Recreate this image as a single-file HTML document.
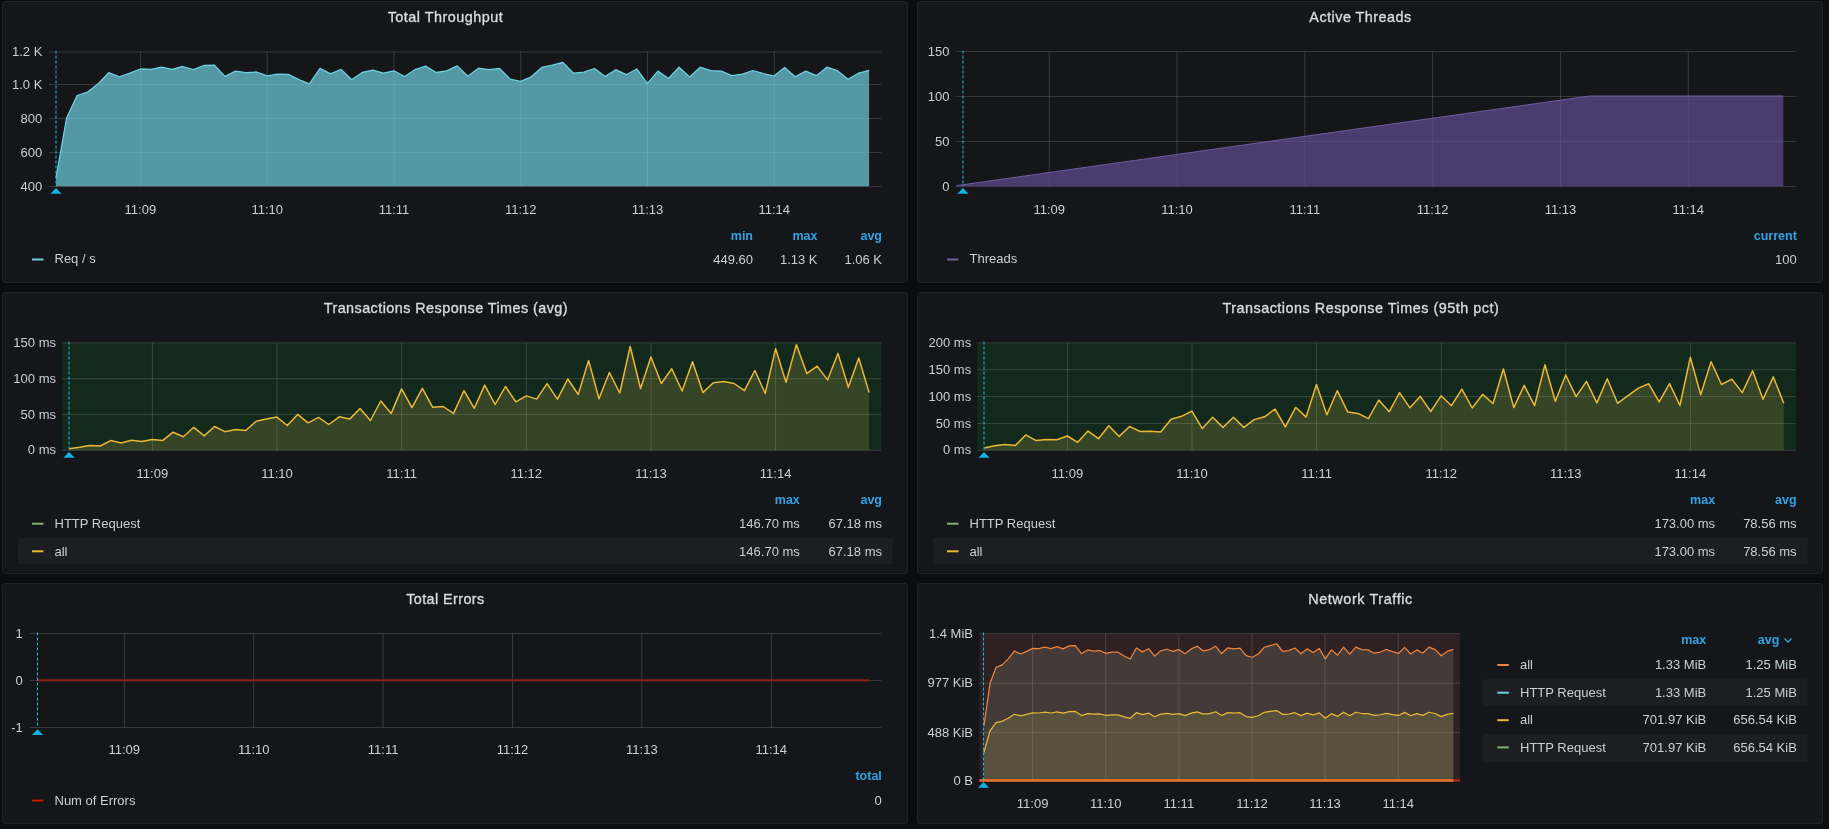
<!DOCTYPE html>
<html><head><meta charset="utf-8"><title>Grafana</title>
<style>
html,body{margin:0;padding:0;}
body{width:1829px;height:829px;background:#0b0c0e;position:relative;overflow:hidden;font-family:"Liberation Sans", sans-serif;}
.p{position:absolute;box-sizing:border-box;background:#141619;border:1px solid #202226;border-radius:3px;}
.s{position:absolute;left:0;top:0;}
.t{position:absolute;white-space:nowrap;}
.tx{position:absolute;left:0;top:0;width:1829px;height:829px;will-change:transform;}
</style></head><body>
<div class="p" style="left:2px;top:1px;width:906px;height:282px"></div><div class="p" style="left:917px;top:1px;width:906px;height:282px"></div><div class="p" style="left:2px;top:292px;width:906px;height:282px"></div><div class="p" style="left:917px;top:292px;width:906px;height:282px"></div><div class="p" style="left:2px;top:583px;width:906px;height:241px"></div><div class="p" style="left:917px;top:583px;width:906px;height:241px"></div>
<svg class="s" width="1829" height="829" viewBox="0 0 1829 829"><line x1="49" y1="52.0" x2="881" y2="52.0" stroke="rgba(200,200,200,0.2)" stroke-width="1"/><line x1="49" y1="84.5" x2="881" y2="84.5" stroke="rgba(200,200,200,0.2)" stroke-width="1"/><line x1="49" y1="118.5" x2="881" y2="118.5" stroke="rgba(200,200,200,0.2)" stroke-width="1"/><line x1="49" y1="152.5" x2="881" y2="152.5" stroke="rgba(200,200,200,0.2)" stroke-width="1"/><line x1="49" y1="186.5" x2="881" y2="186.5" stroke="rgba(200,200,200,0.2)" stroke-width="1"/><line x1="140.4" y1="51.5" x2="140.4" y2="186.5" stroke="rgba(200,200,200,0.2)" stroke-width="1"/><line x1="267.18" y1="51.5" x2="267.18" y2="186.5" stroke="rgba(200,200,200,0.2)" stroke-width="1"/><line x1="393.96000000000004" y1="51.5" x2="393.96000000000004" y2="186.5" stroke="rgba(200,200,200,0.2)" stroke-width="1"/><line x1="520.74" y1="51.5" x2="520.74" y2="186.5" stroke="rgba(200,200,200,0.2)" stroke-width="1"/><line x1="647.52" y1="51.5" x2="647.52" y2="186.5" stroke="rgba(200,200,200,0.2)" stroke-width="1"/><line x1="774.3" y1="51.5" x2="774.3" y2="186.5" stroke="rgba(200,200,200,0.2)" stroke-width="1"/><polygon points="56.00,186.2 56.00,177.80 66.56,118.30 77.12,95.50 87.68,92.10 98.24,83.70 108.80,72.70 119.36,76.90 129.92,73.20 140.48,69.00 151.04,69.30 161.60,67.20 172.16,69.30 182.72,66.50 193.28,69.70 203.84,65.50 214.40,65.10 224.96,76.40 235.52,71.20 246.08,72.70 256.64,72.00 267.20,75.90 277.76,74.20 288.32,74.30 298.88,79.70 309.44,83.90 320.00,68.40 330.56,73.90 341.12,69.40 351.68,79.70 362.24,72.50 372.80,70.20 383.36,73.10 393.92,70.80 404.48,76.50 415.04,69.70 425.60,66.10 436.16,72.50 446.72,70.80 457.28,65.90 467.84,76.20 478.40,68.20 488.96,69.70 499.52,68.50 510.08,79.10 520.64,81.40 531.20,76.80 541.76,67.40 552.32,65.10 562.88,62.50 573.44,73.10 584.00,72.20 594.56,68.50 605.12,76.60 615.68,69.70 626.24,74.70 636.80,69.00 647.36,83.70 657.92,71.10 668.48,78.50 679.04,67.20 689.60,77.00 700.16,67.20 710.72,70.70 721.28,71.10 731.84,75.70 742.40,74.10 752.96,70.50 763.52,73.60 774.08,76.10 784.64,67.60 795.20,76.80 805.76,71.10 816.32,75.70 826.88,67.20 837.44,70.70 848.00,79.30 858.56,73.20 869.12,70.50 869.12,186.2" fill="#6ed0e0" fill-opacity="0.7"/><polyline points="56.00,177.80 66.56,118.30 77.12,95.50 87.68,92.10 98.24,83.70 108.80,72.70 119.36,76.90 129.92,73.20 140.48,69.00 151.04,69.30 161.60,67.20 172.16,69.30 182.72,66.50 193.28,69.70 203.84,65.50 214.40,65.10 224.96,76.40 235.52,71.20 246.08,72.70 256.64,72.00 267.20,75.90 277.76,74.20 288.32,74.30 298.88,79.70 309.44,83.90 320.00,68.40 330.56,73.90 341.12,69.40 351.68,79.70 362.24,72.50 372.80,70.20 383.36,73.10 393.92,70.80 404.48,76.50 415.04,69.70 425.60,66.10 436.16,72.50 446.72,70.80 457.28,65.90 467.84,76.20 478.40,68.20 488.96,69.70 499.52,68.50 510.08,79.10 520.64,81.40 531.20,76.80 541.76,67.40 552.32,65.10 562.88,62.50 573.44,73.10 584.00,72.20 594.56,68.50 605.12,76.60 615.68,69.70 626.24,74.70 636.80,69.00 647.36,83.70 657.92,71.10 668.48,78.50 679.04,67.20 689.60,77.00 700.16,67.20 710.72,70.70 721.28,71.10 731.84,75.70 742.40,74.10 752.96,70.50 763.52,73.60 774.08,76.10 784.64,67.60 795.20,76.80 805.76,71.10 816.32,75.70 826.88,67.20 837.44,70.70 848.00,79.30 858.56,73.20 869.12,70.50" fill="none" stroke="#6ed0e0" stroke-width="1.3" stroke-linejoin="round"/><line x1="56.0" y1="50.5" x2="56.0" y2="186.2" stroke="#16bfe6" stroke-width="1" stroke-dasharray="3 2"/><polygon points="50.4,193.7 61.6,193.7 56.0,187.89999999999998" fill="#0fb5e0"/><line x1="32" y1="259.5" x2="43.5" y2="259.5" stroke="#6ed0e0" stroke-width="2"/><line x1="955.5" y1="51.5" x2="1795.8" y2="51.5" stroke="rgba(200,200,200,0.2)" stroke-width="1"/><line x1="955.5" y1="96.5" x2="1795.8" y2="96.5" stroke="rgba(200,200,200,0.2)" stroke-width="1"/><line x1="955.5" y1="141.5" x2="1795.8" y2="141.5" stroke="rgba(200,200,200,0.2)" stroke-width="1"/><line x1="955.5" y1="186.5" x2="1795.8" y2="186.5" stroke="rgba(200,200,200,0.2)" stroke-width="1"/><line x1="1049.2" y1="51.5" x2="1049.2" y2="186.5" stroke="rgba(200,200,200,0.2)" stroke-width="1"/><line x1="1177.02" y1="51.5" x2="1177.02" y2="186.5" stroke="rgba(200,200,200,0.2)" stroke-width="1"/><line x1="1304.8400000000001" y1="51.5" x2="1304.8400000000001" y2="186.5" stroke="rgba(200,200,200,0.2)" stroke-width="1"/><line x1="1432.66" y1="51.5" x2="1432.66" y2="186.5" stroke="rgba(200,200,200,0.2)" stroke-width="1"/><line x1="1560.48" y1="51.5" x2="1560.48" y2="186.5" stroke="rgba(200,200,200,0.2)" stroke-width="1"/><line x1="1688.3" y1="51.5" x2="1688.3" y2="186.5" stroke="rgba(200,200,200,0.2)" stroke-width="1"/><polygon points="956.3,186.2 956.3,185.7 1589.8,96 1783.3,96 1783.3,186.2" fill="#614d93" fill-opacity="0.7"/><polyline points="956.3,185.7 1589.8,96 1783.3,96" fill="none" stroke="#705da0" stroke-width="1"/><line x1="963.0" y1="50.5" x2="963.0" y2="186.2" stroke="#16bfe6" stroke-width="1" stroke-dasharray="3 2"/><polygon points="957.4,193.7 968.6,193.7 963.0,187.89999999999998" fill="#0fb5e0"/><line x1="947" y1="259.5" x2="958.5" y2="259.5" stroke="#705da0" stroke-width="2"/><rect x="62.3" y="342.9" width="818.9000000000001" height="107.40000000000003" fill="rgba(11,237,50,0.09)"/><line x1="62.3" y1="342.9" x2="881.2" y2="342.9" stroke="rgba(200,200,200,0.2)" stroke-width="1"/><line x1="62.3" y1="378.7" x2="881.2" y2="378.7" stroke="rgba(200,200,200,0.2)" stroke-width="1"/><line x1="62.3" y1="414.5" x2="881.2" y2="414.5" stroke="rgba(200,200,200,0.2)" stroke-width="1"/><line x1="62.3" y1="450.3" x2="881.2" y2="450.3" stroke="rgba(200,200,200,0.2)" stroke-width="1"/><line x1="152.4" y1="342.9" x2="152.4" y2="450.3" stroke="rgba(200,200,200,0.2)" stroke-width="1"/><line x1="277.04" y1="342.9" x2="277.04" y2="450.3" stroke="rgba(200,200,200,0.2)" stroke-width="1"/><line x1="401.68" y1="342.9" x2="401.68" y2="450.3" stroke="rgba(200,200,200,0.2)" stroke-width="1"/><line x1="526.32" y1="342.9" x2="526.32" y2="450.3" stroke="rgba(200,200,200,0.2)" stroke-width="1"/><line x1="650.96" y1="342.9" x2="650.96" y2="450.3" stroke="rgba(200,200,200,0.2)" stroke-width="1"/><line x1="775.6" y1="342.9" x2="775.6" y2="450.3" stroke="rgba(200,200,200,0.2)" stroke-width="1"/><polygon points="69.10,450.3 69.10,448.70 79.49,447.20 89.88,445.40 100.27,446.00 110.66,440.60 121.05,442.90 131.44,440.30 141.83,441.40 152.22,439.40 162.61,440.60 173.00,432.20 183.39,436.80 193.78,427.30 204.17,435.90 214.56,426.50 224.95,431.70 235.34,429.60 245.73,430.50 256.12,421.30 266.51,419.10 276.90,417.10 287.29,425.50 297.68,414.40 308.07,422.80 318.46,417.40 328.85,424.50 339.24,416.80 349.63,419.10 360.02,408.50 370.41,420.50 380.80,401.00 391.19,413.40 401.58,388.90 411.97,407.70 422.36,388.40 432.75,407.30 443.14,406.50 453.53,413.40 463.92,390.70 474.31,408.30 484.70,385.10 495.09,404.50 505.48,386.50 515.87,401.80 526.26,395.90 536.65,399.10 547.04,383.60 557.43,399.10 567.82,379.00 578.21,394.50 588.60,360.40 598.99,398.80 609.38,372.50 619.77,393.00 630.16,346.50 640.55,388.50 650.94,357.00 661.33,383.50 671.72,368.80 682.11,391.00 692.50,361.80 702.89,392.60 713.28,382.80 723.67,381.50 734.06,383.50 744.45,390.60 754.84,370.50 765.23,393.50 775.62,348.70 786.01,382.20 796.40,344.60 806.79,373.60 817.18,366.10 827.57,379.90 837.96,353.40 848.35,387.20 858.74,358.00 869.13,392.60 869.13,450.3" fill="#7eb26d" fill-opacity="0.1"/><polygon points="69.10,450.3 69.10,448.70 79.49,447.20 89.88,445.40 100.27,446.00 110.66,440.60 121.05,442.90 131.44,440.30 141.83,441.40 152.22,439.40 162.61,440.60 173.00,432.20 183.39,436.80 193.78,427.30 204.17,435.90 214.56,426.50 224.95,431.70 235.34,429.60 245.73,430.50 256.12,421.30 266.51,419.10 276.90,417.10 287.29,425.50 297.68,414.40 308.07,422.80 318.46,417.40 328.85,424.50 339.24,416.80 349.63,419.10 360.02,408.50 370.41,420.50 380.80,401.00 391.19,413.40 401.58,388.90 411.97,407.70 422.36,388.40 432.75,407.30 443.14,406.50 453.53,413.40 463.92,390.70 474.31,408.30 484.70,385.10 495.09,404.50 505.48,386.50 515.87,401.80 526.26,395.90 536.65,399.10 547.04,383.60 557.43,399.10 567.82,379.00 578.21,394.50 588.60,360.40 598.99,398.80 609.38,372.50 619.77,393.00 630.16,346.50 640.55,388.50 650.94,357.00 661.33,383.50 671.72,368.80 682.11,391.00 692.50,361.80 702.89,392.60 713.28,382.80 723.67,381.50 734.06,383.50 744.45,390.60 754.84,370.50 765.23,393.50 775.62,348.70 786.01,382.20 796.40,344.60 806.79,373.60 817.18,366.10 827.57,379.90 837.96,353.40 848.35,387.20 858.74,358.00 869.13,392.60 869.13,450.3" fill="#eab839" fill-opacity="0.12"/><polyline points="69.10,448.70 79.49,447.20 89.88,445.40 100.27,446.00 110.66,440.60 121.05,442.90 131.44,440.30 141.83,441.40 152.22,439.40 162.61,440.60 173.00,432.20 183.39,436.80 193.78,427.30 204.17,435.90 214.56,426.50 224.95,431.70 235.34,429.60 245.73,430.50 256.12,421.30 266.51,419.10 276.90,417.10 287.29,425.50 297.68,414.40 308.07,422.80 318.46,417.40 328.85,424.50 339.24,416.80 349.63,419.10 360.02,408.50 370.41,420.50 380.80,401.00 391.19,413.40 401.58,388.90 411.97,407.70 422.36,388.40 432.75,407.30 443.14,406.50 453.53,413.40 463.92,390.70 474.31,408.30 484.70,385.10 495.09,404.50 505.48,386.50 515.87,401.80 526.26,395.90 536.65,399.10 547.04,383.60 557.43,399.10 567.82,379.00 578.21,394.50 588.60,360.40 598.99,398.80 609.38,372.50 619.77,393.00 630.16,346.50 640.55,388.50 650.94,357.00 661.33,383.50 671.72,368.80 682.11,391.00 692.50,361.80 702.89,392.60 713.28,382.80 723.67,381.50 734.06,383.50 744.45,390.60 754.84,370.50 765.23,393.50 775.62,348.70 786.01,382.20 796.40,344.60 806.79,373.60 817.18,366.10 827.57,379.90 837.96,353.40 848.35,387.20 858.74,358.00 869.13,392.60" fill="none" stroke="#eab839" stroke-width="1.5" stroke-linejoin="round"/><line x1="69.0" y1="341.5" x2="69.0" y2="450.3" stroke="#16bfe6" stroke-width="1" stroke-dasharray="3 2"/><polygon points="63.4,457.8 74.6,457.8 69.0,452.0" fill="#0fb5e0"/><rect x="18" y="538" width="874.5" height="26" fill="#1c1e22"/><line x1="32" y1="523.7" x2="43.5" y2="523.7" stroke="#7eb26d" stroke-width="2"/><line x1="32" y1="551.3" x2="43.5" y2="551.3" stroke="#eab839" stroke-width="2"/><rect x="977.3" y="342.9" width="818.7" height="107.40000000000003" fill="rgba(11,237,50,0.09)"/><line x1="977.3" y1="342.9" x2="1796.0" y2="342.9" stroke="rgba(200,200,200,0.2)" stroke-width="1"/><line x1="977.3" y1="369.75" x2="1796.0" y2="369.75" stroke="rgba(200,200,200,0.2)" stroke-width="1"/><line x1="977.3" y1="396.59999999999997" x2="1796.0" y2="396.59999999999997" stroke="rgba(200,200,200,0.2)" stroke-width="1"/><line x1="977.3" y1="423.45" x2="1796.0" y2="423.45" stroke="rgba(200,200,200,0.2)" stroke-width="1"/><line x1="977.3" y1="450.29999999999995" x2="1796.0" y2="450.29999999999995" stroke="rgba(200,200,200,0.2)" stroke-width="1"/><line x1="1067.4" y1="342.9" x2="1067.4" y2="450.3" stroke="rgba(200,200,200,0.2)" stroke-width="1"/><line x1="1192.0" y1="342.9" x2="1192.0" y2="450.3" stroke="rgba(200,200,200,0.2)" stroke-width="1"/><line x1="1316.6000000000001" y1="342.9" x2="1316.6000000000001" y2="450.3" stroke="rgba(200,200,200,0.2)" stroke-width="1"/><line x1="1441.2" y1="342.9" x2="1441.2" y2="450.3" stroke="rgba(200,200,200,0.2)" stroke-width="1"/><line x1="1565.8000000000002" y1="342.9" x2="1565.8000000000002" y2="450.3" stroke="rgba(200,200,200,0.2)" stroke-width="1"/><line x1="1690.4" y1="342.9" x2="1690.4" y2="450.3" stroke="rgba(200,200,200,0.2)" stroke-width="1"/><polygon points="984.20,450.3 984.20,448.10 994.58,445.80 1004.97,444.40 1015.35,445.50 1025.74,434.90 1036.12,440.60 1046.50,439.50 1056.89,439.80 1067.27,436.00 1077.66,442.30 1088.04,431.10 1098.42,438.70 1108.81,425.70 1119.19,436.40 1129.58,426.50 1139.96,431.40 1150.34,431.20 1160.73,432.00 1171.11,419.20 1181.50,416.30 1191.88,411.10 1202.26,428.60 1212.65,417.30 1223.03,427.40 1233.42,417.30 1243.80,427.40 1254.18,419.60 1264.57,416.80 1274.95,409.00 1285.34,426.80 1295.72,407.30 1306.10,417.10 1316.49,384.60 1326.87,414.80 1337.26,390.70 1347.64,411.90 1358.02,413.40 1368.41,418.60 1378.79,400.00 1389.18,411.80 1399.56,392.70 1409.94,407.80 1420.33,396.30 1430.71,411.50 1441.10,395.80 1451.48,405.70 1461.86,389.10 1472.25,408.00 1482.63,394.40 1493.02,403.50 1503.40,369.00 1513.78,407.60 1524.17,385.40 1534.55,405.70 1544.94,364.80 1555.32,401.30 1565.70,375.00 1576.09,396.60 1586.47,381.40 1596.86,402.90 1607.24,378.80 1617.62,403.30 1628.01,395.60 1638.39,388.10 1648.78,383.80 1659.16,401.90 1669.54,383.60 1679.93,405.50 1690.31,357.30 1700.70,394.80 1711.08,361.70 1721.46,384.50 1731.85,379.20 1742.23,392.60 1752.62,370.70 1763.00,399.30 1773.38,376.90 1783.77,403.30 1783.77,450.3" fill="#7eb26d" fill-opacity="0.1"/><polygon points="984.20,450.3 984.20,448.10 994.58,445.80 1004.97,444.40 1015.35,445.50 1025.74,434.90 1036.12,440.60 1046.50,439.50 1056.89,439.80 1067.27,436.00 1077.66,442.30 1088.04,431.10 1098.42,438.70 1108.81,425.70 1119.19,436.40 1129.58,426.50 1139.96,431.40 1150.34,431.20 1160.73,432.00 1171.11,419.20 1181.50,416.30 1191.88,411.10 1202.26,428.60 1212.65,417.30 1223.03,427.40 1233.42,417.30 1243.80,427.40 1254.18,419.60 1264.57,416.80 1274.95,409.00 1285.34,426.80 1295.72,407.30 1306.10,417.10 1316.49,384.60 1326.87,414.80 1337.26,390.70 1347.64,411.90 1358.02,413.40 1368.41,418.60 1378.79,400.00 1389.18,411.80 1399.56,392.70 1409.94,407.80 1420.33,396.30 1430.71,411.50 1441.10,395.80 1451.48,405.70 1461.86,389.10 1472.25,408.00 1482.63,394.40 1493.02,403.50 1503.40,369.00 1513.78,407.60 1524.17,385.40 1534.55,405.70 1544.94,364.80 1555.32,401.30 1565.70,375.00 1576.09,396.60 1586.47,381.40 1596.86,402.90 1607.24,378.80 1617.62,403.30 1628.01,395.60 1638.39,388.10 1648.78,383.80 1659.16,401.90 1669.54,383.60 1679.93,405.50 1690.31,357.30 1700.70,394.80 1711.08,361.70 1721.46,384.50 1731.85,379.20 1742.23,392.60 1752.62,370.70 1763.00,399.30 1773.38,376.90 1783.77,403.30 1783.77,450.3" fill="#eab839" fill-opacity="0.12"/><polyline points="984.20,448.10 994.58,445.80 1004.97,444.40 1015.35,445.50 1025.74,434.90 1036.12,440.60 1046.50,439.50 1056.89,439.80 1067.27,436.00 1077.66,442.30 1088.04,431.10 1098.42,438.70 1108.81,425.70 1119.19,436.40 1129.58,426.50 1139.96,431.40 1150.34,431.20 1160.73,432.00 1171.11,419.20 1181.50,416.30 1191.88,411.10 1202.26,428.60 1212.65,417.30 1223.03,427.40 1233.42,417.30 1243.80,427.40 1254.18,419.60 1264.57,416.80 1274.95,409.00 1285.34,426.80 1295.72,407.30 1306.10,417.10 1316.49,384.60 1326.87,414.80 1337.26,390.70 1347.64,411.90 1358.02,413.40 1368.41,418.60 1378.79,400.00 1389.18,411.80 1399.56,392.70 1409.94,407.80 1420.33,396.30 1430.71,411.50 1441.10,395.80 1451.48,405.70 1461.86,389.10 1472.25,408.00 1482.63,394.40 1493.02,403.50 1503.40,369.00 1513.78,407.60 1524.17,385.40 1534.55,405.70 1544.94,364.80 1555.32,401.30 1565.70,375.00 1576.09,396.60 1586.47,381.40 1596.86,402.90 1607.24,378.80 1617.62,403.30 1628.01,395.60 1638.39,388.10 1648.78,383.80 1659.16,401.90 1669.54,383.60 1679.93,405.50 1690.31,357.30 1700.70,394.80 1711.08,361.70 1721.46,384.50 1731.85,379.20 1742.23,392.60 1752.62,370.70 1763.00,399.30 1773.38,376.90 1783.77,403.30" fill="none" stroke="#eab839" stroke-width="1.5" stroke-linejoin="round"/><line x1="984.0" y1="341.5" x2="984.0" y2="450.3" stroke="#16bfe6" stroke-width="1" stroke-dasharray="3 2"/><polygon points="978.4,457.8 989.6,457.8 984.0,452.0" fill="#0fb5e0"/><rect x="933" y="538" width="874.8" height="26" fill="#1c1e22"/><line x1="947" y1="523.7" x2="958.5" y2="523.7" stroke="#7eb26d" stroke-width="2"/><line x1="947" y1="551.3" x2="958.5" y2="551.3" stroke="#eab839" stroke-width="2"/><line x1="30" y1="633.5" x2="881" y2="633.5" stroke="rgba(200,200,200,0.2)" stroke-width="1"/><line x1="30" y1="680.5" x2="881" y2="680.5" stroke="rgba(200,200,200,0.2)" stroke-width="1"/><line x1="30" y1="727.5" x2="881" y2="727.5" stroke="rgba(200,200,200,0.2)" stroke-width="1"/><line x1="124.3" y1="633.5" x2="124.3" y2="727.5" stroke="rgba(200,200,200,0.2)" stroke-width="1"/><line x1="253.7" y1="633.5" x2="253.7" y2="727.5" stroke="rgba(200,200,200,0.2)" stroke-width="1"/><line x1="383.1" y1="633.5" x2="383.1" y2="727.5" stroke="rgba(200,200,200,0.2)" stroke-width="1"/><line x1="512.5" y1="633.5" x2="512.5" y2="727.5" stroke="rgba(200,200,200,0.2)" stroke-width="1"/><line x1="641.9" y1="633.5" x2="641.9" y2="727.5" stroke="rgba(200,200,200,0.2)" stroke-width="1"/><line x1="771.3" y1="633.5" x2="771.3" y2="727.5" stroke="rgba(200,200,200,0.2)" stroke-width="1"/><line x1="37" y1="680.2" x2="869" y2="680.2" stroke="#8f2217" stroke-width="2"/><line x1="37.5" y1="632.5" x2="37.5" y2="727.5" stroke="#16bfe6" stroke-width="1" stroke-dasharray="3 2"/><polygon points="31.9,735.0 43.1,735.0 37.5,729.2" fill="#0fb5e0"/><line x1="32" y1="800.6" x2="43.5" y2="800.6" stroke="#bf1b00" stroke-width="2"/><rect x="979.5" y="633.6" width="480.5999999999999" height="146.69999999999993" fill="rgba(234,112,112,0.12)"/><line x1="979.5" y1="633.6" x2="1460.1" y2="633.6" stroke="rgba(200,200,200,0.2)" stroke-width="1"/><line x1="979.5" y1="683.2" x2="1460.1" y2="683.2" stroke="rgba(200,200,200,0.2)" stroke-width="1"/><line x1="979.5" y1="732.4" x2="1460.1" y2="732.4" stroke="rgba(200,200,200,0.2)" stroke-width="1"/><line x1="979.5" y1="780.5" x2="1460.1" y2="780.5" stroke="rgba(200,200,200,0.2)" stroke-width="1"/><line x1="1032.6" y1="633.6" x2="1032.6" y2="780.3" stroke="rgba(200,200,200,0.2)" stroke-width="1"/><line x1="1105.7199999999998" y1="633.6" x2="1105.7199999999998" y2="780.3" stroke="rgba(200,200,200,0.2)" stroke-width="1"/><line x1="1178.84" y1="633.6" x2="1178.84" y2="780.3" stroke="rgba(200,200,200,0.2)" stroke-width="1"/><line x1="1251.96" y1="633.6" x2="1251.96" y2="780.3" stroke="rgba(200,200,200,0.2)" stroke-width="1"/><line x1="1325.08" y1="633.6" x2="1325.08" y2="780.3" stroke="rgba(200,200,200,0.2)" stroke-width="1"/><line x1="1398.1999999999998" y1="633.6" x2="1398.1999999999998" y2="780.3" stroke="rgba(200,200,200,0.2)" stroke-width="1"/><polygon points="983.90,780.3 983.90,725.97 990.00,683.55 996.09,667.29 1002.19,664.87 1008.29,658.88 1014.38,651.04 1020.48,654.03 1026.58,651.39 1032.68,648.40 1038.77,648.61 1044.87,647.12 1050.97,648.61 1057.06,646.62 1063.16,648.90 1069.26,645.90 1075.36,645.62 1081.45,653.67 1087.55,649.97 1093.65,651.04 1099.74,650.54 1105.84,653.32 1111.94,652.11 1118.03,652.18 1124.13,656.03 1130.23,659.02 1136.33,647.97 1142.42,651.89 1148.52,648.68 1154.62,656.03 1160.71,650.89 1166.81,649.25 1172.91,651.32 1179.00,649.68 1185.10,653.75 1191.20,648.90 1197.30,646.33 1203.39,650.89 1209.49,649.68 1215.59,646.19 1221.68,653.53 1227.78,647.83 1233.88,648.90 1239.97,648.04 1246.07,655.60 1252.17,657.24 1258.26,653.96 1264.36,647.26 1270.46,645.62 1276.56,643.76 1282.65,651.32 1288.75,650.68 1294.85,648.04 1300.94,653.82 1307.04,648.90 1313.14,652.46 1319.24,648.40 1325.33,658.88 1331.43,649.90 1337.53,655.17 1343.62,647.12 1349.72,654.10 1355.82,647.12 1361.91,649.61 1368.01,649.90 1374.11,653.18 1380.20,652.04 1386.30,649.47 1392.40,651.68 1398.50,653.46 1404.59,647.40 1410.69,653.96 1416.79,649.90 1422.88,653.18 1428.98,647.12 1435.08,649.61 1441.17,655.74 1447.27,651.39 1453.37,649.47 1453.37,780.3" fill="#ef843c" fill-opacity="0.1"/><polygon points="983.90,780.3 983.90,725.97 990.00,683.55 996.09,667.29 1002.19,664.87 1008.29,658.88 1014.38,651.04 1020.48,654.03 1026.58,651.39 1032.68,648.40 1038.77,648.61 1044.87,647.12 1050.97,648.61 1057.06,646.62 1063.16,648.90 1069.26,645.90 1075.36,645.62 1081.45,653.67 1087.55,649.97 1093.65,651.04 1099.74,650.54 1105.84,653.32 1111.94,652.11 1118.03,652.18 1124.13,656.03 1130.23,659.02 1136.33,647.97 1142.42,651.89 1148.52,648.68 1154.62,656.03 1160.71,650.89 1166.81,649.25 1172.91,651.32 1179.00,649.68 1185.10,653.75 1191.20,648.90 1197.30,646.33 1203.39,650.89 1209.49,649.68 1215.59,646.19 1221.68,653.53 1227.78,647.83 1233.88,648.90 1239.97,648.04 1246.07,655.60 1252.17,657.24 1258.26,653.96 1264.36,647.26 1270.46,645.62 1276.56,643.76 1282.65,651.32 1288.75,650.68 1294.85,648.04 1300.94,653.82 1307.04,648.90 1313.14,652.46 1319.24,648.40 1325.33,658.88 1331.43,649.90 1337.53,655.17 1343.62,647.12 1349.72,654.10 1355.82,647.12 1361.91,649.61 1368.01,649.90 1374.11,653.18 1380.20,652.04 1386.30,649.47 1392.40,651.68 1398.50,653.46 1404.59,647.40 1410.69,653.96 1416.79,649.90 1422.88,653.18 1428.98,647.12 1435.08,649.61 1441.17,655.74 1447.27,651.39 1453.37,649.47 1453.37,780.3" fill="#6ed0e0" fill-opacity="0.1"/><polygon points="983.90,780.3 983.90,752.54 990.00,730.86 996.09,722.55 1002.19,721.31 1008.29,718.25 1014.38,714.24 1020.48,715.77 1026.58,714.42 1032.68,712.89 1038.77,713.00 1044.87,712.24 1050.97,713.00 1057.06,711.98 1063.16,713.15 1069.26,711.62 1075.36,711.47 1081.45,715.59 1087.55,713.69 1093.65,714.24 1099.74,713.99 1105.84,715.41 1111.94,714.79 1118.03,714.82 1124.13,716.79 1130.23,718.32 1136.33,712.67 1142.42,714.68 1148.52,713.04 1154.62,716.79 1160.71,714.17 1166.81,713.33 1172.91,714.39 1179.00,713.55 1185.10,715.63 1191.20,713.15 1197.30,711.84 1203.39,714.17 1209.49,713.55 1215.59,711.76 1221.68,715.52 1227.78,712.60 1233.88,713.15 1239.97,712.71 1246.07,716.57 1252.17,717.41 1258.26,715.73 1264.36,712.31 1270.46,711.47 1276.56,710.52 1282.65,714.39 1288.75,714.06 1294.85,712.71 1300.94,715.66 1307.04,713.15 1313.14,714.97 1319.24,712.89 1325.33,718.25 1331.43,713.66 1337.53,716.35 1343.62,712.24 1349.72,715.81 1355.82,712.24 1361.91,713.51 1368.01,713.66 1374.11,715.33 1380.20,714.75 1386.30,713.44 1392.40,714.57 1398.50,715.48 1404.59,712.38 1410.69,715.73 1416.79,713.66 1422.88,715.33 1428.98,712.24 1435.08,713.51 1441.17,716.65 1447.27,714.42 1453.37,713.44 1453.37,780.3" fill="#eab839" fill-opacity="0.1"/><polygon points="983.90,780.3 983.90,752.54 990.00,730.86 996.09,722.55 1002.19,721.31 1008.29,718.25 1014.38,714.24 1020.48,715.77 1026.58,714.42 1032.68,712.89 1038.77,713.00 1044.87,712.24 1050.97,713.00 1057.06,711.98 1063.16,713.15 1069.26,711.62 1075.36,711.47 1081.45,715.59 1087.55,713.69 1093.65,714.24 1099.74,713.99 1105.84,715.41 1111.94,714.79 1118.03,714.82 1124.13,716.79 1130.23,718.32 1136.33,712.67 1142.42,714.68 1148.52,713.04 1154.62,716.79 1160.71,714.17 1166.81,713.33 1172.91,714.39 1179.00,713.55 1185.10,715.63 1191.20,713.15 1197.30,711.84 1203.39,714.17 1209.49,713.55 1215.59,711.76 1221.68,715.52 1227.78,712.60 1233.88,713.15 1239.97,712.71 1246.07,716.57 1252.17,717.41 1258.26,715.73 1264.36,712.31 1270.46,711.47 1276.56,710.52 1282.65,714.39 1288.75,714.06 1294.85,712.71 1300.94,715.66 1307.04,713.15 1313.14,714.97 1319.24,712.89 1325.33,718.25 1331.43,713.66 1337.53,716.35 1343.62,712.24 1349.72,715.81 1355.82,712.24 1361.91,713.51 1368.01,713.66 1374.11,715.33 1380.20,714.75 1386.30,713.44 1392.40,714.57 1398.50,715.48 1404.59,712.38 1410.69,715.73 1416.79,713.66 1422.88,715.33 1428.98,712.24 1435.08,713.51 1441.17,716.65 1447.27,714.42 1453.37,713.44 1453.37,780.3" fill="#7eb26d" fill-opacity="0.1"/><polyline points="983.90,725.97 990.00,683.55 996.09,667.29 1002.19,664.87 1008.29,658.88 1014.38,651.04 1020.48,654.03 1026.58,651.39 1032.68,648.40 1038.77,648.61 1044.87,647.12 1050.97,648.61 1057.06,646.62 1063.16,648.90 1069.26,645.90 1075.36,645.62 1081.45,653.67 1087.55,649.97 1093.65,651.04 1099.74,650.54 1105.84,653.32 1111.94,652.11 1118.03,652.18 1124.13,656.03 1130.23,659.02 1136.33,647.97 1142.42,651.89 1148.52,648.68 1154.62,656.03 1160.71,650.89 1166.81,649.25 1172.91,651.32 1179.00,649.68 1185.10,653.75 1191.20,648.90 1197.30,646.33 1203.39,650.89 1209.49,649.68 1215.59,646.19 1221.68,653.53 1227.78,647.83 1233.88,648.90 1239.97,648.04 1246.07,655.60 1252.17,657.24 1258.26,653.96 1264.36,647.26 1270.46,645.62 1276.56,643.76 1282.65,651.32 1288.75,650.68 1294.85,648.04 1300.94,653.82 1307.04,648.90 1313.14,652.46 1319.24,648.40 1325.33,658.88 1331.43,649.90 1337.53,655.17 1343.62,647.12 1349.72,654.10 1355.82,647.12 1361.91,649.61 1368.01,649.90 1374.11,653.18 1380.20,652.04 1386.30,649.47 1392.40,651.68 1398.50,653.46 1404.59,647.40 1410.69,653.96 1416.79,649.90 1422.88,653.18 1428.98,647.12 1435.08,649.61 1441.17,655.74 1447.27,651.39 1453.37,649.47" fill="none" stroke="#ef843c" stroke-width="1.25" stroke-linejoin="round"/><polyline points="983.90,752.54 990.00,730.86 996.09,722.55 1002.19,721.31 1008.29,718.25 1014.38,714.24 1020.48,715.77 1026.58,714.42 1032.68,712.89 1038.77,713.00 1044.87,712.24 1050.97,713.00 1057.06,711.98 1063.16,713.15 1069.26,711.62 1075.36,711.47 1081.45,715.59 1087.55,713.69 1093.65,714.24 1099.74,713.99 1105.84,715.41 1111.94,714.79 1118.03,714.82 1124.13,716.79 1130.23,718.32 1136.33,712.67 1142.42,714.68 1148.52,713.04 1154.62,716.79 1160.71,714.17 1166.81,713.33 1172.91,714.39 1179.00,713.55 1185.10,715.63 1191.20,713.15 1197.30,711.84 1203.39,714.17 1209.49,713.55 1215.59,711.76 1221.68,715.52 1227.78,712.60 1233.88,713.15 1239.97,712.71 1246.07,716.57 1252.17,717.41 1258.26,715.73 1264.36,712.31 1270.46,711.47 1276.56,710.52 1282.65,714.39 1288.75,714.06 1294.85,712.71 1300.94,715.66 1307.04,713.15 1313.14,714.97 1319.24,712.89 1325.33,718.25 1331.43,713.66 1337.53,716.35 1343.62,712.24 1349.72,715.81 1355.82,712.24 1361.91,713.51 1368.01,713.66 1374.11,715.33 1380.20,714.75 1386.30,713.44 1392.40,714.57 1398.50,715.48 1404.59,712.38 1410.69,715.73 1416.79,713.66 1422.88,715.33 1428.98,712.24 1435.08,713.51 1441.17,716.65 1447.27,714.42 1453.37,713.44" fill="none" stroke="#eab839" stroke-width="1.25" stroke-linejoin="round"/><line x1="979.5" y1="780.5" x2="1460.1" y2="780.5" stroke="rgba(237,46,24,0.6)" stroke-width="2.5"/><line x1="979.5" y1="780.5" x2="1453.3690000000001" y2="780.5" stroke="#e0752d" stroke-width="2.5"/><line x1="983.5" y1="632.5" x2="983.5" y2="780.3" stroke="#16bfe6" stroke-width="1" stroke-dasharray="3 2"/><polygon points="977.9,787.8 989.1,787.8 983.5,782.0" fill="#0fb5e0"/><polyline points="1784.5,638.5 1788,642 1791.5,638.5" fill="none" stroke="#33a2e5" stroke-width="1.3"/><rect x="1483" y="679.3" width="324.70000000000005" height="26.700000000000045" fill="#1c1e22"/><rect x="1483" y="733.7" width="324.70000000000005" height="27.699999999999932" fill="#1c1e22"/><line x1="1497.3" y1="665.0" x2="1508.8" y2="665.0" stroke="#ef843c" stroke-width="2"/><line x1="1497.3" y1="692.7" x2="1508.8" y2="692.7" stroke="#6ed0e0" stroke-width="2"/><line x1="1497.3" y1="720.2" x2="1508.8" y2="720.2" stroke="#eab839" stroke-width="2"/><line x1="1497.3" y1="747.4" x2="1508.8" y2="747.4" stroke="#7eb26d" stroke-width="2"/></svg>
<div class="tx"><div class="t" style="left:145.50px;width:600px;text-align:center;top:9.87px;font-size:14.4px;line-height:14.4px;font-weight:normal;color:#d8d9da;-webkit-text-stroke:0.35px #d8d9da;letter-spacing:0.5px;">Total Throughput</div><div class="t" style="left:1060.50px;width:600px;text-align:center;top:9.97px;font-size:14.4px;line-height:14.4px;font-weight:normal;color:#d8d9da;-webkit-text-stroke:0.35px #d8d9da;letter-spacing:0.47px;">Active Threads</div><div class="t" style="left:145.90px;width:600px;text-align:center;top:300.87px;font-size:14.4px;line-height:14.4px;font-weight:normal;color:#d8d9da;-webkit-text-stroke:0.35px #d8d9da;letter-spacing:0.44px;">Transactions Response Times (avg)</div><div class="t" style="left:1060.80px;width:600px;text-align:center;top:300.87px;font-size:14.4px;line-height:14.4px;font-weight:normal;color:#d8d9da;-webkit-text-stroke:0.35px #d8d9da;letter-spacing:0.5px;">Transactions Response Times (95th pct)</div><div class="t" style="left:145.40px;width:600px;text-align:center;top:592.27px;font-size:14.4px;line-height:14.4px;font-weight:normal;color:#d8d9da;-webkit-text-stroke:0.35px #d8d9da;letter-spacing:0.41px;">Total Errors</div><div class="t" style="left:1060.50px;width:600px;text-align:center;top:592.27px;font-size:14.4px;line-height:14.4px;font-weight:normal;color:#d8d9da;-webkit-text-stroke:0.35px #d8d9da;letter-spacing:0.6px;">Network Traffic</div><div class="t" style="right:1786.70px;top:45.25px;font-size:13px;line-height:13px;font-weight:normal;color:#c7d0d9;">1.2 K</div><div class="t" style="right:1786.70px;top:77.75px;font-size:13px;line-height:13px;font-weight:normal;color:#c7d0d9;">1.0 K</div><div class="t" style="right:1786.70px;top:111.75px;font-size:13px;line-height:13px;font-weight:normal;color:#c7d0d9;">800</div><div class="t" style="right:1786.70px;top:145.75px;font-size:13px;line-height:13px;font-weight:normal;color:#c7d0d9;">600</div><div class="t" style="right:1786.70px;top:179.75px;font-size:13px;line-height:13px;font-weight:normal;color:#c7d0d9;">400</div><div class="t" style="left:-159.60px;width:600px;text-align:center;top:202.55px;font-size:13px;line-height:13px;font-weight:normal;color:#c7d0d9;">11:09</div><div class="t" style="left:-32.82px;width:600px;text-align:center;top:202.55px;font-size:13px;line-height:13px;font-weight:normal;color:#c7d0d9;">11:10</div><div class="t" style="left:93.96px;width:600px;text-align:center;top:202.55px;font-size:13px;line-height:13px;font-weight:normal;color:#c7d0d9;">11:11</div><div class="t" style="left:220.74px;width:600px;text-align:center;top:202.55px;font-size:13px;line-height:13px;font-weight:normal;color:#c7d0d9;">11:12</div><div class="t" style="left:347.52px;width:600px;text-align:center;top:202.55px;font-size:13px;line-height:13px;font-weight:normal;color:#c7d0d9;">11:13</div><div class="t" style="left:474.30px;width:600px;text-align:center;top:202.55px;font-size:13px;line-height:13px;font-weight:normal;color:#c7d0d9;">11:14</div><div class="t" style="left:54.50px;top:252.15px;font-size:13px;line-height:13px;font-weight:normal;color:#c7d0d9;">Req / s</div><div class="t" style="right:1076.00px;top:229.69px;font-size:12.5px;line-height:12.5px;font-weight:bold;color:#33a2e5;">min</div><div class="t" style="right:1011.50px;top:229.69px;font-size:12.5px;line-height:12.5px;font-weight:bold;color:#33a2e5;">max</div><div class="t" style="right:947.00px;top:229.69px;font-size:12.5px;line-height:12.5px;font-weight:bold;color:#33a2e5;">avg</div><div class="t" style="right:1076.00px;top:252.95px;font-size:13px;line-height:13px;font-weight:normal;color:#c7d0d9;">449.60</div><div class="t" style="right:1011.50px;top:252.95px;font-size:13px;line-height:13px;font-weight:normal;color:#c7d0d9;">1.13 K</div><div class="t" style="right:947.00px;top:252.95px;font-size:13px;line-height:13px;font-weight:normal;color:#c7d0d9;">1.06 K</div><div class="t" style="right:879.50px;top:44.65px;font-size:13px;line-height:13px;font-weight:normal;color:#c7d0d9;">150</div><div class="t" style="right:879.50px;top:89.65px;font-size:13px;line-height:13px;font-weight:normal;color:#c7d0d9;">100</div><div class="t" style="right:879.50px;top:134.65px;font-size:13px;line-height:13px;font-weight:normal;color:#c7d0d9;">50</div><div class="t" style="right:879.50px;top:179.65px;font-size:13px;line-height:13px;font-weight:normal;color:#c7d0d9;">0</div><div class="t" style="left:749.20px;width:600px;text-align:center;top:202.55px;font-size:13px;line-height:13px;font-weight:normal;color:#c7d0d9;">11:09</div><div class="t" style="left:877.02px;width:600px;text-align:center;top:202.55px;font-size:13px;line-height:13px;font-weight:normal;color:#c7d0d9;">11:10</div><div class="t" style="left:1004.84px;width:600px;text-align:center;top:202.55px;font-size:13px;line-height:13px;font-weight:normal;color:#c7d0d9;">11:11</div><div class="t" style="left:1132.66px;width:600px;text-align:center;top:202.55px;font-size:13px;line-height:13px;font-weight:normal;color:#c7d0d9;">11:12</div><div class="t" style="left:1260.48px;width:600px;text-align:center;top:202.55px;font-size:13px;line-height:13px;font-weight:normal;color:#c7d0d9;">11:13</div><div class="t" style="left:1388.30px;width:600px;text-align:center;top:202.55px;font-size:13px;line-height:13px;font-weight:normal;color:#c7d0d9;">11:14</div><div class="t" style="left:969.50px;top:252.15px;font-size:13px;line-height:13px;font-weight:normal;color:#c7d0d9;">Threads</div><div class="t" style="right:32.20px;top:229.69px;font-size:12.5px;line-height:12.5px;font-weight:bold;color:#33a2e5;">current</div><div class="t" style="right:32.20px;top:252.95px;font-size:13px;line-height:13px;font-weight:normal;color:#c7d0d9;">100</div><div class="t" style="right:1773.00px;top:335.95px;font-size:13px;line-height:13px;font-weight:normal;color:#c7d0d9;">150 ms</div><div class="t" style="right:1773.00px;top:371.75px;font-size:13px;line-height:13px;font-weight:normal;color:#c7d0d9;">100 ms</div><div class="t" style="right:1773.00px;top:407.55px;font-size:13px;line-height:13px;font-weight:normal;color:#c7d0d9;">50 ms</div><div class="t" style="right:1773.00px;top:443.35px;font-size:13px;line-height:13px;font-weight:normal;color:#c7d0d9;">0 ms</div><div class="t" style="left:-147.60px;width:600px;text-align:center;top:466.65px;font-size:13px;line-height:13px;font-weight:normal;color:#c7d0d9;">11:09</div><div class="t" style="left:-22.96px;width:600px;text-align:center;top:466.65px;font-size:13px;line-height:13px;font-weight:normal;color:#c7d0d9;">11:10</div><div class="t" style="left:101.68px;width:600px;text-align:center;top:466.65px;font-size:13px;line-height:13px;font-weight:normal;color:#c7d0d9;">11:11</div><div class="t" style="left:226.32px;width:600px;text-align:center;top:466.65px;font-size:13px;line-height:13px;font-weight:normal;color:#c7d0d9;">11:12</div><div class="t" style="left:350.96px;width:600px;text-align:center;top:466.65px;font-size:13px;line-height:13px;font-weight:normal;color:#c7d0d9;">11:13</div><div class="t" style="left:475.60px;width:600px;text-align:center;top:466.65px;font-size:13px;line-height:13px;font-weight:normal;color:#c7d0d9;">11:14</div><div class="t" style="right:1029.20px;top:494.19px;font-size:12.5px;line-height:12.5px;font-weight:bold;color:#33a2e5;">max</div><div class="t" style="right:947.00px;top:494.19px;font-size:12.5px;line-height:12.5px;font-weight:bold;color:#33a2e5;">avg</div><div class="t" style="left:54.50px;top:516.95px;font-size:13px;line-height:13px;font-weight:normal;color:#c7d0d9;">HTTP Request</div><div class="t" style="left:54.50px;top:544.55px;font-size:13px;line-height:13px;font-weight:normal;color:#c7d0d9;">all</div><div class="t" style="right:1029.20px;top:517.15px;font-size:13px;line-height:13px;font-weight:normal;color:#c7d0d9;">146.70 ms</div><div class="t" style="right:947.00px;top:517.15px;font-size:13px;line-height:13px;font-weight:normal;color:#c7d0d9;">67.18 ms</div><div class="t" style="right:1029.20px;top:544.75px;font-size:13px;line-height:13px;font-weight:normal;color:#c7d0d9;">146.70 ms</div><div class="t" style="right:947.00px;top:544.75px;font-size:13px;line-height:13px;font-weight:normal;color:#c7d0d9;">67.18 ms</div><div class="t" style="right:857.80px;top:335.95px;font-size:13px;line-height:13px;font-weight:normal;color:#c7d0d9;">200 ms</div><div class="t" style="right:857.80px;top:362.80px;font-size:13px;line-height:13px;font-weight:normal;color:#c7d0d9;">150 ms</div><div class="t" style="right:857.80px;top:389.65px;font-size:13px;line-height:13px;font-weight:normal;color:#c7d0d9;">100 ms</div><div class="t" style="right:857.80px;top:416.50px;font-size:13px;line-height:13px;font-weight:normal;color:#c7d0d9;">50 ms</div><div class="t" style="right:857.80px;top:443.35px;font-size:13px;line-height:13px;font-weight:normal;color:#c7d0d9;">0 ms</div><div class="t" style="left:767.40px;width:600px;text-align:center;top:466.65px;font-size:13px;line-height:13px;font-weight:normal;color:#c7d0d9;">11:09</div><div class="t" style="left:892.00px;width:600px;text-align:center;top:466.65px;font-size:13px;line-height:13px;font-weight:normal;color:#c7d0d9;">11:10</div><div class="t" style="left:1016.60px;width:600px;text-align:center;top:466.65px;font-size:13px;line-height:13px;font-weight:normal;color:#c7d0d9;">11:11</div><div class="t" style="left:1141.20px;width:600px;text-align:center;top:466.65px;font-size:13px;line-height:13px;font-weight:normal;color:#c7d0d9;">11:12</div><div class="t" style="left:1265.80px;width:600px;text-align:center;top:466.65px;font-size:13px;line-height:13px;font-weight:normal;color:#c7d0d9;">11:13</div><div class="t" style="left:1390.40px;width:600px;text-align:center;top:466.65px;font-size:13px;line-height:13px;font-weight:normal;color:#c7d0d9;">11:14</div><div class="t" style="right:113.90px;top:494.19px;font-size:12.5px;line-height:12.5px;font-weight:bold;color:#33a2e5;">max</div><div class="t" style="right:32.40px;top:494.19px;font-size:12.5px;line-height:12.5px;font-weight:bold;color:#33a2e5;">avg</div><div class="t" style="left:969.50px;top:516.95px;font-size:13px;line-height:13px;font-weight:normal;color:#c7d0d9;">HTTP Request</div><div class="t" style="left:969.50px;top:544.55px;font-size:13px;line-height:13px;font-weight:normal;color:#c7d0d9;">all</div><div class="t" style="right:113.90px;top:517.15px;font-size:13px;line-height:13px;font-weight:normal;color:#c7d0d9;">173.00 ms</div><div class="t" style="right:32.40px;top:517.15px;font-size:13px;line-height:13px;font-weight:normal;color:#c7d0d9;">78.56 ms</div><div class="t" style="right:113.90px;top:544.75px;font-size:13px;line-height:13px;font-weight:normal;color:#c7d0d9;">173.00 ms</div><div class="t" style="right:32.40px;top:544.75px;font-size:13px;line-height:13px;font-weight:normal;color:#c7d0d9;">78.56 ms</div><div class="t" style="right:1806.20px;top:626.65px;font-size:13px;line-height:13px;font-weight:normal;color:#c7d0d9;">1</div><div class="t" style="right:1806.20px;top:673.65px;font-size:13px;line-height:13px;font-weight:normal;color:#c7d0d9;">0</div><div class="t" style="right:1806.20px;top:720.65px;font-size:13px;line-height:13px;font-weight:normal;color:#c7d0d9;">-1</div><div class="t" style="left:-175.70px;width:600px;text-align:center;top:743.25px;font-size:13px;line-height:13px;font-weight:normal;color:#c7d0d9;">11:09</div><div class="t" style="left:-46.30px;width:600px;text-align:center;top:743.25px;font-size:13px;line-height:13px;font-weight:normal;color:#c7d0d9;">11:10</div><div class="t" style="left:83.10px;width:600px;text-align:center;top:743.25px;font-size:13px;line-height:13px;font-weight:normal;color:#c7d0d9;">11:11</div><div class="t" style="left:212.50px;width:600px;text-align:center;top:743.25px;font-size:13px;line-height:13px;font-weight:normal;color:#c7d0d9;">11:12</div><div class="t" style="left:341.90px;width:600px;text-align:center;top:743.25px;font-size:13px;line-height:13px;font-weight:normal;color:#c7d0d9;">11:13</div><div class="t" style="left:471.30px;width:600px;text-align:center;top:743.25px;font-size:13px;line-height:13px;font-weight:normal;color:#c7d0d9;">11:14</div><div class="t" style="right:947.20px;top:770.19px;font-size:12.5px;line-height:12.5px;font-weight:bold;color:#33a2e5;">total</div><div class="t" style="left:54.50px;top:793.85px;font-size:13px;line-height:13px;font-weight:normal;color:#c7d0d9;">Num of Errors</div><div class="t" style="right:947.20px;top:794.45px;font-size:13px;line-height:13px;font-weight:normal;color:#c7d0d9;">0</div><div class="t" style="right:856.00px;top:626.75px;font-size:13px;line-height:13px;font-weight:normal;color:#c7d0d9;">1.4 MiB</div><div class="t" style="right:856.00px;top:676.35px;font-size:13px;line-height:13px;font-weight:normal;color:#c7d0d9;">977 KiB</div><div class="t" style="right:856.00px;top:725.55px;font-size:13px;line-height:13px;font-weight:normal;color:#c7d0d9;">488 KiB</div><div class="t" style="right:856.00px;top:773.65px;font-size:13px;line-height:13px;font-weight:normal;color:#c7d0d9;">0 B</div><div class="t" style="left:732.60px;width:600px;text-align:center;top:797.15px;font-size:13px;line-height:13px;font-weight:normal;color:#c7d0d9;">11:09</div><div class="t" style="left:805.72px;width:600px;text-align:center;top:797.15px;font-size:13px;line-height:13px;font-weight:normal;color:#c7d0d9;">11:10</div><div class="t" style="left:878.84px;width:600px;text-align:center;top:797.15px;font-size:13px;line-height:13px;font-weight:normal;color:#c7d0d9;">11:11</div><div class="t" style="left:951.96px;width:600px;text-align:center;top:797.15px;font-size:13px;line-height:13px;font-weight:normal;color:#c7d0d9;">11:12</div><div class="t" style="left:1025.08px;width:600px;text-align:center;top:797.15px;font-size:13px;line-height:13px;font-weight:normal;color:#c7d0d9;">11:13</div><div class="t" style="left:1098.20px;width:600px;text-align:center;top:797.15px;font-size:13px;line-height:13px;font-weight:normal;color:#c7d0d9;">11:14</div><div class="t" style="right:122.80px;top:634.49px;font-size:12.5px;line-height:12.5px;font-weight:bold;color:#33a2e5;">max</div><div class="t" style="right:49.60px;top:634.49px;font-size:12.5px;line-height:12.5px;font-weight:bold;color:#33a2e5;">avg</div><div class="t" style="left:1520.00px;top:658.15px;font-size:13px;line-height:13px;font-weight:normal;color:#c7d0d9;">all</div><div class="t" style="right:122.80px;top:658.25px;font-size:13px;line-height:13px;font-weight:normal;color:#c7d0d9;">1.33 MiB</div><div class="t" style="right:32.20px;top:658.25px;font-size:13px;line-height:13px;font-weight:normal;color:#c7d0d9;">1.25 MiB</div><div class="t" style="left:1520.00px;top:685.85px;font-size:13px;line-height:13px;font-weight:normal;color:#c7d0d9;">HTTP Request</div><div class="t" style="right:122.80px;top:685.95px;font-size:13px;line-height:13px;font-weight:normal;color:#c7d0d9;">1.33 MiB</div><div class="t" style="right:32.20px;top:685.95px;font-size:13px;line-height:13px;font-weight:normal;color:#c7d0d9;">1.25 MiB</div><div class="t" style="left:1520.00px;top:713.35px;font-size:13px;line-height:13px;font-weight:normal;color:#c7d0d9;">all</div><div class="t" style="right:122.80px;top:713.45px;font-size:13px;line-height:13px;font-weight:normal;color:#c7d0d9;">701.97 KiB</div><div class="t" style="right:32.20px;top:713.45px;font-size:13px;line-height:13px;font-weight:normal;color:#c7d0d9;">656.54 KiB</div><div class="t" style="left:1520.00px;top:740.55px;font-size:13px;line-height:13px;font-weight:normal;color:#c7d0d9;">HTTP Request</div><div class="t" style="right:122.80px;top:740.65px;font-size:13px;line-height:13px;font-weight:normal;color:#c7d0d9;">701.97 KiB</div><div class="t" style="right:32.20px;top:740.65px;font-size:13px;line-height:13px;font-weight:normal;color:#c7d0d9;">656.54 KiB</div></div>
</body></html>
